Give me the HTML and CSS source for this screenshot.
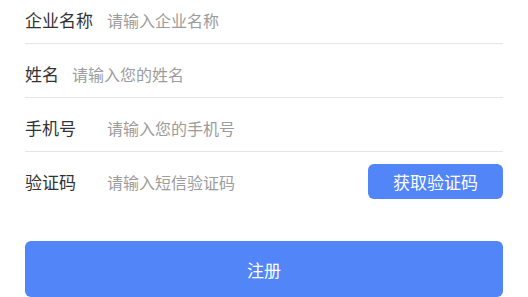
FILE: index.html
```html
<!DOCTYPE html>
<html lang="zh">
<head>
<meta charset="utf-8">
<link rel="stylesheet" href="styles.css">
</head>
<body>
<div class="form">
  <div class="row">
    <span class="label">企业名称</span>
    <span class="input">请输入企业名称</span>
  </div>
  <div class="row">
    <span class="label short">姓名</span>
    <span class="input">请输入您的姓名</span>
  </div>
  <div class="row">
    <span class="label">手机号</span>
    <span class="input">请输入您的手机号</span>
  </div>
  <div class="row last">
    <span class="label">验证码</span>
    <span class="input">请输入短信验证码</span>
    <button class="code-btn">获取验证码</button>
  </div>
  <button class="submit">注册</button>
</div>
</body>
</html>
```

FILE: styles.css
```css
html, body {
  margin: 0;
  padding: 0;
  background: #ffffff;
  overflow: hidden;
}
body {
  font-family: "Noto Sans CJK SC", "Noto Sans", sans-serif;
}
.form {
  margin-top: -10px;
  padding: 0 25px;
  display: flex;
  flex-direction: column;
}
.row {
  display: flex;
  align-items: center;
  padding-top: 6px;
  box-sizing: content-box;
  border-bottom: 1px solid #e6e6e6;
  height: 47px;
}
.row.last {
  border-bottom: none;
}
.label {
  width: 82px;
  flex: none;
  font-size: 17px;
  line-height: 22px;
  color: #333333;
}
.label.short {
  width: auto;
  margin-right: 13px;
}
.input {
  flex: 1;
  font-size: 16px;
  line-height: 22px;
  color: #9c9c9c;
}
.code-btn {
  flex: none;
  width: 135px;
  height: 35px;
  border: none;
  border-radius: 6px;
  background: #5285f8;
  color: #ffffff;
  font-family: inherit;
  font-size: 17px;
  padding: 0;
}
.submit {
  margin-top: 36px;
  height: 56px;
  border: none;
  border-radius: 6px;
  background: #5285f8;
  color: #ffffff;
  font-family: inherit;
  font-size: 17px;
  padding: 0;
}
```
